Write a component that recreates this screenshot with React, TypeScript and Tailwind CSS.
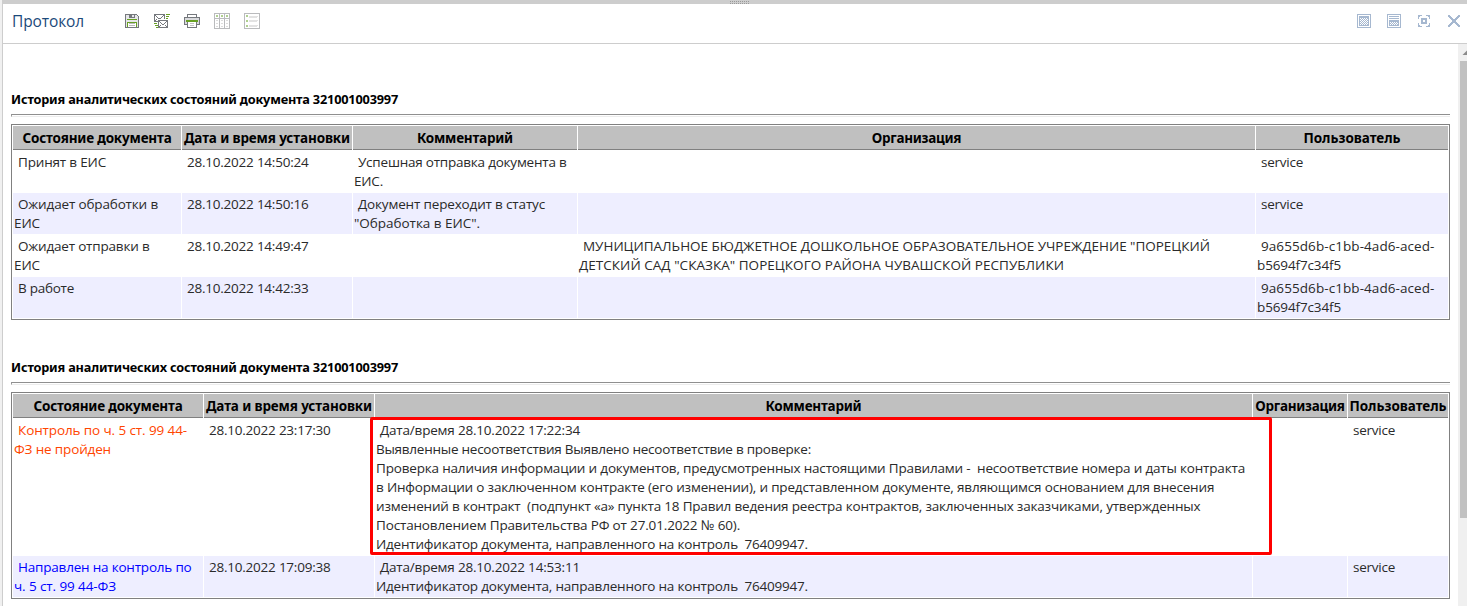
import type { ReactNode } from "react";

type Line = [text: string, tracking: string];
type Cell = { lines: Line[]; color?: string };
type Column = [title: string, tracking: string];

const stamp = (text: string): Cell => ({ lines: [[text, "tracking-[-0.225px]"]] });
const service: Cell = { lines: [["service", "tracking-[-0.25px]"]] };
const uuid: Cell = {
  lines: [
    ["9a655d6b-c1bb-4ad6-aced-", "tracking-[0.075px]"],
    ["b5694f7c34f5", "tracking-[-0.13px]"],
  ],
};
const empty: Cell = { lines: [] };

const columns: Column[] = [
  ["Состояние документа", "tracking-[-0.186px]"],
  ["Дата и время установки", "tracking-[-0.127px]"],
  ["Комментарий", "tracking-[-0.223px]"],
  ["Организация", "tracking-[-0.274px]"],
  ["Пользователь", "tracking-[-0.026px]"],
];

const firstRows: Cell[][] = [
  [
    { lines: [["Принят в ЕИС", "tracking-[-0.173px]"]] },
    stamp("28.10.2022 14:50:24"),
    { lines: [["Успешная отправка документа в", "tracking-[-0.22px]"], ["ЕИС.", "tracking-[-0.2px]"]] },
    empty,
    service,
  ],
  [
    { lines: [["Ожидает обработки в", "tracking-[-0.155px]"], ["ЕИС", "tracking-[-0.09px]"]] },
    stamp("28.10.2022 14:50:16"),
    { lines: [["Документ переходит в статус", "tracking-[-0.16px]"], ['"Обработка в ЕИС".', "tracking-[-0.034px]"]] },
    empty,
    service,
  ],
  [
    { lines: [["Ожидает отправки в", "tracking-[-0.19px]"], ["ЕИС", "tracking-[-0.09px]"]] },
    stamp("28.10.2022 14:49:47"),
    empty,
    {
      lines: [
        ['МУНИЦИПАЛЬНОЕ БЮДЖЕТНОЕ ДОШКОЛЬНОЕ ОБРАЗОВАТЕЛЬНОЕ УЧРЕЖДЕНИЕ "ПОРЕЦКИЙ', "tracking-[-0.018px]"],
        ['ДЕТСКИЙ САД "СКАЗКА" ПОРЕЦКОГО РАЙОНА ЧУВАШСКОЙ РЕСПУБЛИКИ', "tracking-[0.04px]"],
      ],
    },
    uuid,
  ],
  [
    { lines: [["В работе", "tracking-[-0.26px]"]] },
    stamp("28.10.2022 14:42:33"),
    empty,
    empty,
    uuid,
  ],
];

const documentId: Line = [
  "Идентификатор документа, направленного на контроль  76409947.",
  "tracking-[-0.203px]",
];

const secondRows: Cell[][] = [
  [
    {
      color: "text-[#ff4500]",
      lines: [["Контроль по ч. 5 ст. 99 44-", "tracking-[-0.108px]"], ["ФЗ не пройден", "tracking-[-0.153px]"]],
    },
    stamp("28.10.2022 23:17:30"),
    {
      lines: [
        ["Дата/время 28.10.2022 17:22:34", "tracking-[-0.193px]"],
        ["Выявленные несоответствия Выявлено несоответствие в проверке:", "tracking-[-0.243px]"],
        ["Проверка наличия информации и документов, предусмотренных настоящими Правилами -  несоответствие номера и даты контракта", "tracking-[-0.178px]"],
        ["в Информации о заключенном контракте (его изменении), и представленном документе, являющимся основанием для внесения", "tracking-[-0.18px]"],
        ["изменений в контракт  (подпункт «а» пункта 18 Правил ведения реестра контрактов, заключенных заказчиками, утвержденных", "tracking-[-0.19px]"],
        ["Постановлением Правительства РФ от 27.01.2022 № 60).", "tracking-[-0.157px]"],
        documentId,
      ],
    },
    empty,
    service,
  ],
  [
    {
      color: "text-[#0000ff]",
      lines: [["Направлен на контроль по", "tracking-[-0.2px]"], ["ч. 5 ст. 99 44-ФЗ", "tracking-[-0.1px]"]],
    },
    stamp("28.10.2022 17:09:38"),
    { lines: [["Дата/время 28.10.2022 14:53:11", "tracking-[-0.193px]"], documentId] },
    empty,
    service,
  ],
];

function BodyCell({ cell, shaded, highlight }: { cell: Cell; shaded: boolean; highlight?: boolean }) {
  return (
    <div
      className={`relative min-h-[41px] pl-px pt-[2px] pb-px text-[13.5px] leading-[19px] whitespace-pre ${
        shaded ? "bg-[#eeeeff]" : "bg-white"
      } ${cell.color ?? "text-[#2a2a2a]"}`}
    >
      {cell.lines.map(([text, tracking], i) => (
        <p key={i} className={`${tracking} ${i === 0 ? "pl-[4px]" : ""}`}>
          {text}
        </p>
      ))}
      {highlight && (
        <div className="absolute -top-[2px] -left-[5px] z-10 h-[138px] w-[902px] rounded-[2px] border-[3px] border-[#ff0000]" />
      )}
    </div>
  );
}

function History({ grid, rows, highlight }: { grid: string; rows: Cell[][]; highlight?: boolean }) {
  return (
    <section className="w-[1439px]">
      <h2 className="h-[18px] font-['Noto_Sans',sans-serif] text-[12.75px] leading-[18px] font-bold tracking-[-0.195px] text-black">
        История аналитических состояний документа 321001003997
      </h2>
      <div className="mt-[6px] h-[3px] border-t border-b border-l border-t-[#8f8f8f] border-b-[#ececec] border-l-[#9a9a9a]" />
      <div className={`mt-[7px] grid gap-px border border-[#808080] bg-white p-px ${grid}`}>
        {columns.map(([title, tracking]) => (
          <div
            key={title}
            className={`h-[24px] border-b border-[#808080] bg-[#c0c0c0] text-center font-['Noto_Sans',sans-serif] text-[13.5px] leading-[24px] font-bold whitespace-nowrap text-black ${tracking}`}
          >
            {title}
          </div>
        ))}
        {rows.map((row, r) =>
          row.map((cell, c) => (
            <BodyCell key={`${r}-${c}`} cell={cell} shaded={r % 2 === 1} highlight={highlight && r === 0 && c === 2} />
          )),
        )}
      </div>
    </section>
  );
}

function Icon({ w, h, children }: { w: number; h: number; children: ReactNode }) {
  return (
    <svg width={w} height={h} viewBox={`0 0 ${w} ${h}`} shapeRendering="crispEdges" className="block shrink-0">
      {children}
    </svg>
  );
}

function SaveIcon() {
  return (
    <Icon w={14} h={14}>
      <path fill="#75787d" d="M0 0h12v1h1v1h1v12H0z" />
      <path fill="#e6e7e9" d="M1 1h3v3h6V1h2v1h1v11H1z" />
      <path fill="#e6e7e9" d="M7 1h2v2H7z" />
      <path fill="#68a023" d="M2 5h10v1H2zM2 8h10v5H2z" />
      <path fill="#fff" d="M3 9h8v4H3z" />
      <path fill="#b9b9b9" d="M4 9h6v1H4zM4 11h6v1H4z" />
    </Icon>
  );
}

function MailIcon() {
  return (
    <Icon w={16} h={14}>
      <path fill="#75787d" d="M0 0h11v8H0z" />
      <path fill="#fff" d="M1 1h9v6H1z" />
      <path fill="#75787d" d="M1 1h1v1h1v1h1v1h3V3h1V2h1V1h1v1H9v1H8v1H7v1H4V4H3V3H2V2H1zM1 6h1V5h1v1H2v1H1z" />
      <path fill="#fff" d="M3 5h9v1H3z" />
      <path fill="#75787d" d="M4 6h10v8H4z" />
      <path fill="#fff" d="M5 7h8v6H5z" />
      <path fill="#75787d" d="M5 7h1v1h1v1h1v1h2V9h1V8h1V7h1v1h-1v1h-1v1h-1v1H8v-1H7V9H6V8H5zM5 12h1v-1h1v1H6v1H5zM12 11h-1v1h1v1h1v-1h-1z" />
      <path fill="#68a023" d="M12 0h4v1h-4zM12 2h3v1h-3zM12 4h2v1h-2zM0 9h3v1H0zM1 11h3v1H1zM2 13h2v1H2z" />
    </Icon>
  );
}

function PrintIcon() {
  return (
    <Icon w={16} h={14}>
      <path fill="#75787d" d="M3 0h10v4h-1V1H4v3H3z" />
      <path fill="#75787d" d="M0 3h16v8H0z" />
      <path fill="#d9dadd" d="M1 4h14v6H1z" />
      <path fill="#fff" d="M4 1h8v2H4z" />
      <path fill="#68a023" d="M2 6h12v2H2z" />
      <path fill="#75787d" d="M3 8h10v6H3z" />
      <path fill="#fff" d="M4 8h8v5H4z" />
      <path fill="#c4c4c4" d="M6 9h4v1H6zM6 11h4v1H6z" />
    </Icon>
  );
}

function TableIcon() {
  return (
    <Icon w={16} h={16}>
      <path fill="#babbbd" d="M0 0h16v16H0z" />
      <path fill="#fff" d="M1 1h4v4H1zM6 1h4v4H6zM11 1h4v4h-4zM1 6h4v9H1zM6 6h4v9H6zM11 6h4v9h-4z" />
      <path fill="#b0d090" d="M2 2h2v2H2zM7 2h2v2H7zM12 2h2v2h-2z" />
      <path fill="#dcdcdc" d="M2 7h2v1H2zM7 7h2v1H7zM12 7h2v1h-2zM2 10h2v1H2zM7 10h2v1H7zM12 10h2v1h-2zM2 13h2v1H2zM7 13h2v1H7zM12 13h2v1h-2z" />
    </Icon>
  );
}

function ListIcon() {
  return (
    <Icon w={16} h={16}>
      <path fill="#babbbd" d="M0 0h16v16H0z" />
      <path fill="#fff" d="M1 1h14v14H1z" />
      <path fill="#b0d090" d="M2 2h2v2H2zM2 7h2v2H2zM2 12h2v2H2z" />
      <path fill="#e2e2e2" d="M5 3h9v1H5zM5 4h8v1H5zM5 7h9v1H5zM5 8h8v1H5zM5 12h9v1H5zM5 13h8v1H5z" />
    </Icon>
  );
}

function Checks({ x, y, w, h }: { x: number; y: number; w: number; h: number }) {
  const dots: ReactNode[] = [];
  for (let j = 0; j < h; j++) {
    for (let i = j % 2; i < w; i += 2) {
      dots.push(<rect key={`${i}-${j}`} x={x + i} y={y + j} width={1} height={1} fill="#fff" />);
    }
  }
  return <>{dots}</>;
}

function FullPanelIcon() {
  return (
    <Icon w={14} h={14}>
      <path fill="#a6b8d0" d="M0 0h14v14H0z" />
      <path fill="#fff" d="M1 1h12v12H1z" />
      <path fill="#a6b8d0" d="M2 2h10v10H2z" />
      <Checks x={3} y={4} w={8} h={7} />
    </Icon>
  );
}

function SplitPanelIcon() {
  return (
    <Icon w={14} h={14}>
      <path fill="#a6b8d0" d="M0 0h14v14H0z" />
      <path fill="#fff" d="M1 1h12v12H1z" />
      <path fill="#a6b8d0" d="M2 2h10v1H2zM2 4h10v1H2zM2 6h10v6H2z" />
      <Checks x={3} y={8} w={8} h={3} />
    </Icon>
  );
}

function FocusIcon() {
  return (
    <Icon w={12} h={12}>
      <path fill="#a6b8d0" d="M0 0h4v1H2v1H1v2H0zM8 0h4v4h-1V2h-1V1H8zM0 8h1v2h1v1h2v1H0zM11 8h1v4H8v-1h2v-1h1z" />
      <path fill="#a6b8d0" fillRule="evenodd" d="M3 3h6v6H3zM5 5v2h2V5z" />
    </Icon>
  );
}

function CloseIcon() {
  return (
    <Icon w={12} h={12}>
      <path
        fill="#a6b8d0"
        d="M0 0h2v1h1v1h1v1h1v1h2V3h1V2h1V1h1V0h2v2h-1v1h-1v1H9v1H8v2h1v1h1v1h1v1h1v2h-2v-1H9v-1H8V9H7V8H5v1H4v1H3v1H2v1H0v-2h1V9h1V8h1V7h1V5H3V4H2V3H1V2H0z"
      />
    </Icon>
  );
}

function Grip() {
  return (
    <svg width={20} height={4} viewBox="0 0 20 4" shapeRendering="crispEdges" className="block">
      {Array.from({ length: 10 }, (_, i) => (
        <path key={i} fill="#999" d={`M${i * 2} 1h1v1h-1zM${i * 2} 3h1v1h-1z`} />
      ))}
    </svg>
  );
}

export default function App() {
  return (
    <div className="flex h-[606px] w-[1467px] flex-col overflow-hidden bg-white font-['Open_Sans',sans-serif]">
      <div className="flex min-h-0 flex-1">
        <div className="w-[3px] shrink-0 border-r border-[#cdcdcd] bg-[#f0f0f0]" />
        <div className="flex min-w-0 flex-1 flex-col">
          <div className="-ml-px flex h-[4px] shrink-0 bg-[#cdcdcd] pl-[728px]">
            <Grip />
          </div>
          <header className="flex h-[40px] shrink-0 border-b border-[#cdcdcd]">
            <h1 className="ml-[9px] w-[113px] text-[15.5px] leading-[34px] tracking-[-0.115px] text-[#1c4a7a]">
              Протокол
            </h1>
            <div className="flex h-[34px] items-center">
              <div className="w-[29px]"><SaveIcon /></div>
              <div className="w-[30px]"><MailIcon /></div>
              <div className="w-[30px]"><PrintIcon /></div>
              <div className="w-[30px]"><TableIcon /></div>
              <ListIcon />
            </div>
            <div className="mr-[7px] ml-auto flex h-[34px] items-center">
              <div className="w-[30px]"><FullPanelIcon /></div>
              <div className="w-[31px]"><SplitPanelIcon /></div>
              <div className="w-[30px]"><FocusIcon /></div>
              <CloseIcon />
            </div>
          </header>
          <div className="flex min-h-0 flex-1">
            <main className="flex min-w-0 flex-1 flex-col gap-[38px] overflow-hidden pt-[46px] pl-[8px]">
              <History grid="grid-cols-[168px_170px_224px_677px_192px]" rows={firstRows} />
              <History grid="grid-cols-[190px_170px_877px_94px_100px]" rows={secondRows} highlight />
            </main>
            <div className="flex w-[9px] shrink-0 flex-col overflow-hidden bg-[#f0f0f0]">
              <svg width={9} height={17} viewBox="0 0 9 17" className="block shrink-0">
                <path fill="#8b8b8b" d="M4.5 11L9 6.5V11z" />
              </svg>
              <div className="ml-[2px] h-[457px] bg-[#c1c1c1]" />
            </div>
          </div>
        </div>
      </div>
    </div>
  );
}
